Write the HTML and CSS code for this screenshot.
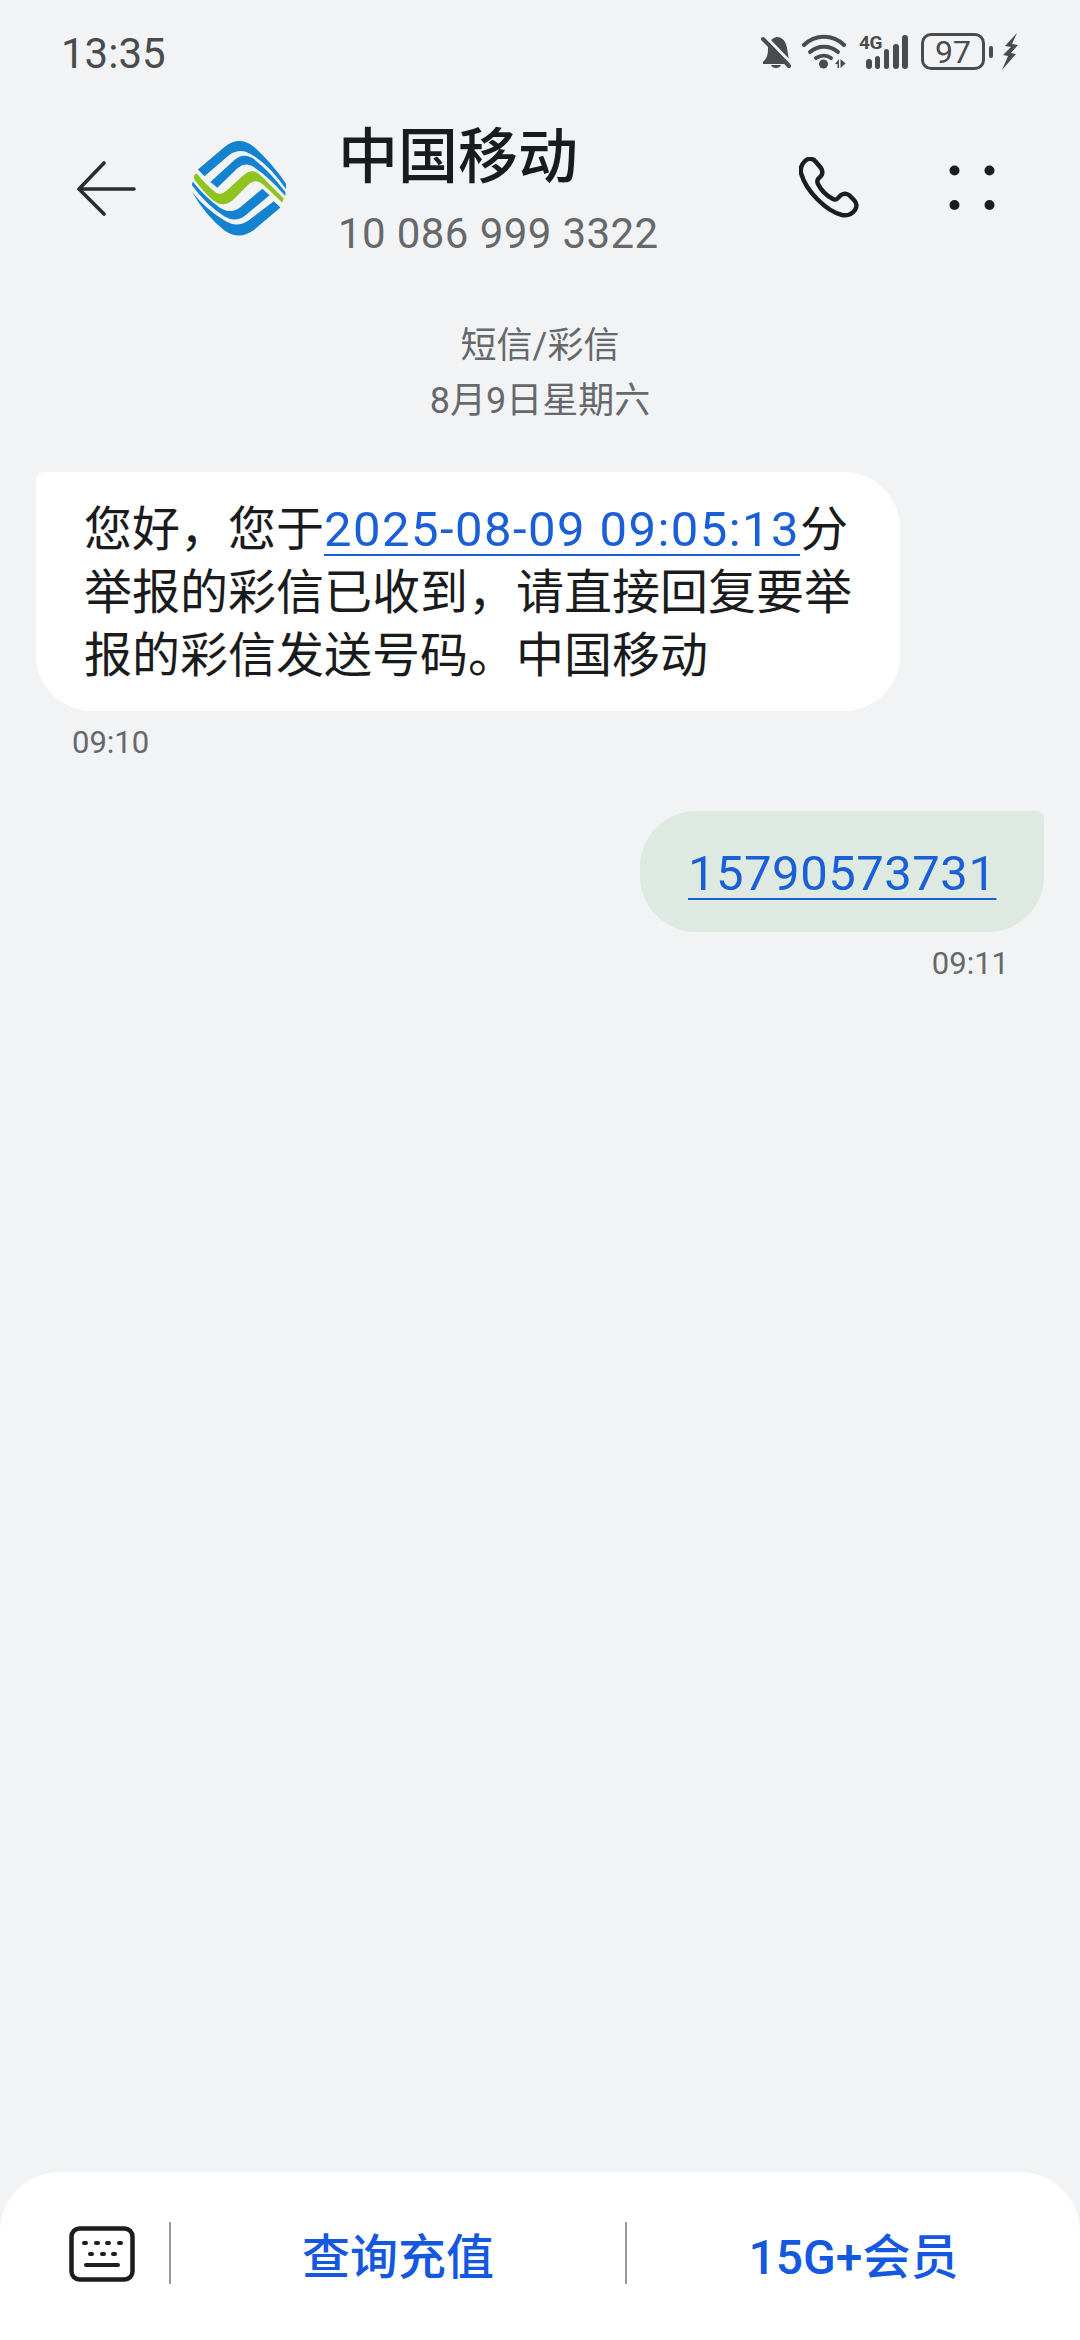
FILE: index.html
```html
<!DOCTYPE html>
<html lang="zh-CN">
<head>
<meta charset="utf-8">
<title>中国移动</title>
<link rel="stylesheet" href="styles.css">
</head>
<body>
<div class="page">
  <div class="status">
    <span class="clock">13:35</span>
    <div class="status-icons">
      <svg class="ic-bell" viewBox="0 0 30 34"><path d="M2 27c3-3 5-6 5-13 0-6 3-11 9-12 6 0 9 5 10 11 1 5 1 10 3 14v2H2z" fill="#4a4b4d"/><path d="M10 30h10c-1 4-9 4-10 0z" fill="#4a4b4d"/><path d="M4 1l26 27" stroke="#f2f3f5" stroke-width="3"/><path d="M2 4l26 27" stroke="#4a4b4d" stroke-width="4" stroke-linecap="round"/></svg>
      <svg class="ic-wifi" viewBox="0 0 44 35"><g fill="none" stroke="#4a4b4d" stroke-width="4" stroke-linecap="round"><path d="M2 11C13 0 31 0 42 11"/><path d="M8 18c8-7 20-7 28 0"/><path d="M14 24c5-3 11-3 15 0"/></g><circle cx="21.500" cy="30" r="4.500" fill="#4a4b4d"/><path d="M33 30l4-5v9h-1.500v-4zM38.500 25v9l5-4.500z" fill="#4a4b4d"/></svg>
      <div class="signal">
        <span class="net">4G</span>
        <svg class="ic-signal" viewBox="0 0 50 36"><g fill="#4a4b4d"><rect x="7" y="25" width="6" height="10" rx="3"/><rect x="16" y="22" width="5" height="13" rx="2.500"/><rect x="25" y="15" width="5" height="20" rx="2.500"/><rect x="34" y="10" width="6" height="25" rx="3"/><rect x="43" y="1" width="6" height="34" rx="3"/></g></svg>
      </div>
      <div class="battery"><span class="level">97</span></div>
      <span class="nub"></span>
      <svg class="ic-bolt" viewBox="0 0 16 37"><path d="M15 0L3 13l6 1-8 8 5 1-6 14 14-16-5-1 7-8-6-1z" fill="#4a4b4d"/></svg>
    </div>
  </div>

  <header class="topbar">
    <svg class="ic-back" viewBox="0 0 60 56"><path d="M58 29H3M28 3L3 29l25 25" fill="none" stroke="#2b2c2e" stroke-width="3.600" stroke-linecap="round" stroke-linejoin="round"/></svg>
    <svg class="logo" viewBox="60 54 298 298">
      <g fill="#1383d0">
        <path d="M84 147L165 78Q210 42 255 78Q308 125 352 190L352 207Q300 130 240 97Q210 82 180 102L104 167Z"/>
        <path d="M122 185L195 118Q220 95 250 112Q300 150 350 215L350 227Q295 165 250 137Q228 124 205 142L143 202Z"/>
        <path d="M280 205L302 225L230 285Q200 310 165 290Q110 255 66 195L68 183Q105 230 150 262Q185 285 215 260Z"/>
        <path d="M315 243L335 262L255 330Q210 364 165 332Q110 290 66 215Q110 270 170 305Q205 325 240 300Z"/>
      </g>
      <path fill="#8fc31f" d="M72 165L80 158Q110 195 140 218Q155 225 170 212L225 162Q250 140 275 165L345 235L340 247L285 195Q262 172 240 190L190 240Q160 265 130 240Q100 215 72 175Z"/>
    </svg>
    <div class="contact">
      <div class="name">中国移动</div>
      <div class="number">10 086 999 3322</div>
    </div>
    <svg class="ic-phone" viewBox="0 0 60 62"><path d="M6 4c3-3 8-3 11 1l5 6c2 3 2 5 0 8l-3 3c-1 2-1 3 0 5 3 6 9 12 15 15 2 1 3 1 5-1l3-3c3-2 5-2 8 0l5 5c3 3 3 7 1 10-3 4-8 6-13 5C27 54 7 34 2 16 1 11 3 7 6 4z" fill="none" stroke="#1c1d1f" stroke-width="4.500" stroke-linejoin="round"/></svg>
    <svg class="ic-more" viewBox="0 0 46 46"><g fill="#1c1d1f"><circle cx="5.500" cy="5.500" r="5"/><circle cx="40.500" cy="5.500" r="5"/><circle cx="5.500" cy="40" r="5"/><circle cx="40.500" cy="40" r="5"/></g></svg>
  </header>

  <main class="thread">
    <div class="meta">
      <div>短信/彩信</div>
      <div>8月9日星期六</div>
    </div>
    <div class="msg msg-in">
      <div class="bubble bubble-in">您好，您于<span class="link link-date">2025-08-09 09:05:13</span>分<br>举报的彩信已收到，请直接回复要举<br>报的彩信发送号码。中国移动</div>
      <div class="stamp stamp-in">09:10</div>
    </div>
    <div class="msg msg-out">
      <div class="bubble bubble-out"><span class="link link-phone">15790573731</span></div>
      <div class="stamp stamp-out">09:11</div>
    </div>
  </main>

  <footer class="actions">
    <svg class="ic-keys" viewBox="0 0 66 56"><rect x="2.500" y="2.500" width="61" height="51" rx="8" fill="none" stroke="#1c1d1f" stroke-width="4.500"/><g fill="#1c1d1f"><rect x="13" y="15" width="6" height="4" rx="2"/><rect x="25" y="15" width="6" height="4" rx="2"/><rect x="36" y="15" width="6" height="4" rx="2"/><rect x="48" y="15" width="6" height="4" rx="2"/><rect x="19" y="26" width="6" height="4" rx="2"/><rect x="31" y="26" width="6" height="4" rx="2"/><rect x="42" y="26" width="6" height="4" rx="2"/><rect x="15" y="37" width="36" height="4" rx="2"/></g></svg>
    <span class="divider"></span>
    <div class="action action-a">查询充值</div>
    <span class="divider"></span>
    <div class="action action-b">15G+会员</div>
  </footer>
</div>
</body>
</html>
```
FILE: styles.css
```css
* { box-sizing: border-box; }
html, body { margin: 0; padding: 0; }
body {
  width: 1080px;
  height: 2340px;
  background: #f2f3f5;
  font-family: Roboto, "Noto Sans CJK SC", sans-serif;
  overflow: hidden;
}
.page { width: 1080px; height: 2340px; display: flex; flex-direction: column; }

.status { height: 113px; display: flex; align-items: flex-start; justify-content: space-between; padding: 31px 62px 0 61px; }
.clock { font-size: 42px; line-height: 46px; color: #4a4b4d; font-weight: 450; }
.status-icons { display: flex; align-items: center; height: 37px; margin-top: 2px; }
.ic-bell { width: 30px; height: 34px; margin-right: 11px; }
.ic-wifi { width: 44px; height: 35px; margin-right: 13px; }
.signal { width: 50px; height: 36px; margin-right: 12px; display: flex; position: relative; }
.ic-signal { width: 50px; height: 36px; }
.net { position: absolute; left: 0; top: -1px; font-size: 19px; line-height: 19px; font-weight: 700; letter-spacing: -0.5px; color: #4a4b4d; }
.battery { width: 64px; height: 37px; border: 3px solid #4a4b4d; border-radius: 10px; display: flex; align-items: center; justify-content: center; }
.level { font-size: 32px; line-height: 30px; color: #4a4b4d; }
.nub { width: 4px; height: 12px; background: #4a4b4d; border-radius: 2px; margin: 0 9px 0 4px; }
.ic-bolt { width: 16px; height: 37px; }

.topbar { height: 150px; display: flex; align-items: center; padding: 0 0 0 76px; }
.ic-back { width: 60px; height: 56px; margin-right: 54px; }
.logo { width: 98px; height: 98px; margin-right: 50px; }
.contact { width: 460px; padding-top: 11px; }
.name { font-size: 60px; line-height: 70px; font-weight: 500; color: #1a1b1d; margin-bottom: 11px; }
.number { font-size: 42px; line-height: 60px; color: #66686b; letter-spacing: 0.4px; }
.ic-phone { width: 60px; height: 62px; margin-left: 1px; }
.ic-more { width: 46px; height: 46px; margin-left: 90px; }

.thread { flex: 1; display: flex; flex-direction: column; }
.meta { margin-top: 56px; text-align: center; font-size: 36px; line-height: 55px; color: #66686b; }
.msg { display: flex; flex-direction: column; }
.msg-in { align-items: flex-start; margin-top: 43px; padding-left: 36px; }
.msg-out { align-items: flex-end; margin-top: 48px; padding-right: 36px; }
.bubble { font-size: 48px; line-height: 63px; color: #1a1b1d; }
.bubble-in { background: #fff; width: 864px; height: 239px; padding: 26px 0 0 48px; border-radius: 8px 56px 56px 56px; }
.bubble-out { background: #dde9e1; width: 404px; height: 121px; padding: 31px 0 0 48px; border-radius: 56px 8px 56px 56px; }
.link { color: #1a5fd8; text-decoration: underline; text-decoration-thickness: 2px; text-underline-offset: 8px; }
.link-date { letter-spacing: 1.45px; font-size: 49px; }
.link-phone { font-size: 49px; letter-spacing: 0.5px; }
.stamp { font-size: 31px; line-height: 40px; color: #66686b; margin-top: 12px; }
.stamp-in { margin-left: 36px; }
.stamp-out { margin-right: 35px; margin-top: 12px; }

.actions { height: 168px; background: #fff; border-radius: 60px 60px 0 0; display: flex; align-items: center; padding: 0 0 6px 69px; }
.ic-keys { width: 66px; height: 56px; margin-right: 34px; margin-top: 2px; }
.divider { width: 2px; height: 62px; background: #999; }
.action { font-size: 48px; font-weight: 500; color: #1558e0; text-align: center; }
.action-a { width: 454px; }
.action-b { width: 453px; }
```
